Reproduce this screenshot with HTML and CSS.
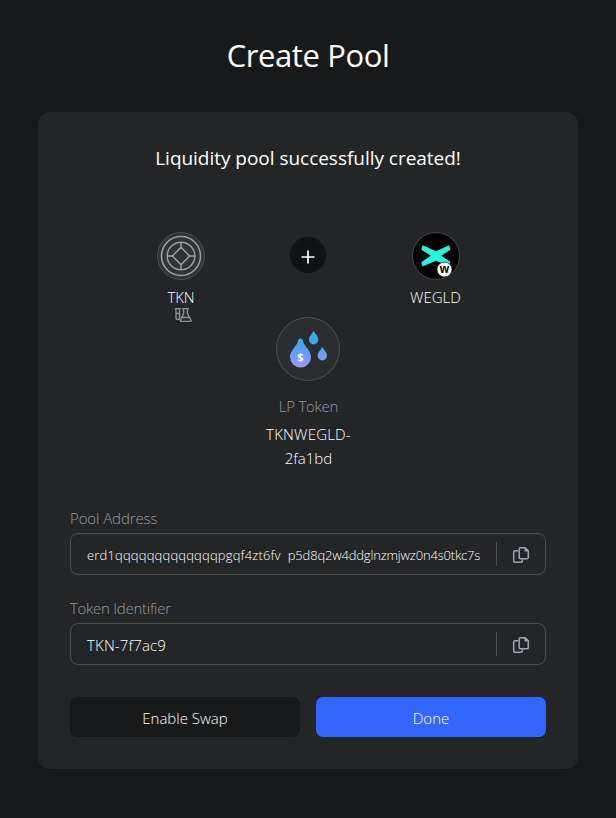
FILE: index.html
```html
<!DOCTYPE html>
<html lang="en">
<head>
<meta charset="utf-8">
<title>Create Pool</title>
<link rel="stylesheet" href="styles.css">
</head>
<body>
<svg width="0" height="0" class="defs">
  <symbol id="copy" viewBox="0 0 18 18">
    <path d="M6.200 4.700H2.900a1.200 1.200 0 0 0-1.200 1.200v9.200a1.200 1.200 0 0 0 1.200 1.200h6.200a1.200 1.200 0 0 0 1.200-1.200v-1.500" fill="none" stroke="currentColor" stroke-width="1.500"/>
    <path d="M8.400 1.700h4.700l3.200 3.200v6.600a1.200 1.200 0 0 1-1.200 1.200H8.400a1.200 1.200 0 0 1-1.200-1.200V2.900a1.200 1.200 0 0 1 1.200-1.200Z" fill="none" stroke="currentColor" stroke-width="1.500"/>
    <path d="M12.500 1.500v4h4Z" fill="currentColor"/>
  </symbol>
</svg>
<h1 class="title">Create Pool</h1>
<main class="card">
  <h2 class="subtitle">Liquidity pool successfully created!</h2>
  <div class="pair">
    <div class="token">
      <svg class="coin" viewBox="0 0 48 48" fill="none" stroke="#9a9fa3">
        <circle cx="24" cy="24" r="23.500" fill="#303335" stroke="#4c4f51"/>
        <circle cx="24" cy="24" r="19.500" stroke-width="1.600"/>
        <circle cx="24" cy="24" r="13.800" stroke-width="1.500"/>
        <path d="M24 15.300 32.700 24 24 32.700 15.300 24ZM24 10v5.300M24 32.700V38M10 24h5.300M32.700 24H38" stroke-width="1.500"/>
      </svg>
      <span class="name tkn">TKN</span>
      <svg class="lab" viewBox="0 0 18 16" fill="none" stroke="#8c939c" stroke-width="1.400">
        <path d="M.8 1.600h6M2 1.600v9.200a1.800 1.800 0 0 0 3.600 0V1.600M2 6.500h3.600M7.900 1.600h7M9.600 1.600v5L6.500 13.200q-.5 1.200.8 1.200h8.900q1.300 0 .8-1.200L13.400 6.600v-5M8 10.500h7.500"/>
      </svg>
    </div>
    <div class="plus">
      <svg width="14" height="14" viewBox="0 0 14 14"><path d="M7 .5v13M.5 7h13" stroke="#fff" stroke-width="1.700"/></svg>
    </div>
    <div class="token">
      <svg class="coin" viewBox="0 0 48 48">
        <circle cx="24" cy="24" r="23.500" fill="#000" stroke="#46484a"/>
        <path d="M10.600 13.300 24 19.200l13.200-5.900 1.200 4.500-9.200 6 9.200 6-1.200 4.500L24 28.700l-13.400 5.700-1.200-4.500 9.500-6.100-9.500-6Z" fill="#23f7dd"/>
        <circle cx="32.500" cy="37.500" r="7.500" fill="#fff" stroke="#111" stroke-width=".7"/>
        <text x="32.500" y="40.800" class="badge">w</text>
      </svg>
      <span class="name wegld">WEGLD</span>
    </div>
  </div>
  <div class="lp">
    <svg class="lp-icon" viewBox="0 0 64 64">
      <defs><linearGradient id="drop" gradientUnits="userSpaceOnUse" x1="0" y1="14" x2="0" y2="51"><stop offset="0" stop-color="#28afe8"/><stop offset=".45" stop-color="#4fa0ee"/><stop offset="1" stop-color="#a395ff"/></linearGradient></defs>
      <circle cx="32" cy="32" r="31.500" fill="#2b2d2f" stroke="#4e5052"/>
      <g fill="url(#drop)">
        <path d="M24.500 21.500c1.600 0 2.300 1.600 3 4 1.400 4 7.500 8.500 7.500 14.600a10.500 10.500 0 0 1-21 0c0-6.100 6.100-10.600 7.500-14.600.7-2.400 1.400-4 3-4Z"/>
        <path d="M37.700 13.500c1.300 3.600 4.700 5.600 4.700 9.200a4.700 4.700 0 0 1-9.400 0c0-3.600 3.400-5.600 4.700-9.200Z"/>
        <path d="M46.300 29.500c1.300 3.600 4.700 5.600 4.700 9.200a4.700 4.700 0 0 1-9.400 0c0-3.600 3.400-5.600 4.700-9.200Z"/>
      </g>
      <text x="24.500" y="43.500" class="dollar">$</text>
    </svg>
    <span class="label lp-label">LP Token</span>
    <div class="lp-name"><span class="lp-a">TKNWEGLD-</span><br><span class="lp-b">2fa1bd</span></div>
  </div>
  <section class="field">
    <div class="label"><span class="pool-label">Pool Address</span></div>
    <div class="box">
      <div class="address"><span class="head">erd1qqqqqqqqqqqqqpgqf4zt6fv</span><span class="tail">p5d8q2w4ddglnzmjwz0n4s0tkc7s</span></div>
      <button class="copy" aria-label="Copy"><svg width="18" height="18"><use href="#copy"/></svg></button>
    </div>
  </section>
  <section class="field">
    <div class="label"><span class="id-label">Token Identifier</span></div>
    <div class="box">
      <span class="identifier">TKN-7f7ac9</span>
      <button class="copy" aria-label="Copy"><svg width="18" height="18"><use href="#copy"/></svg></button>
    </div>
  </section>
  <div class="actions">
    <button class="btn"><span class="swap">Enable Swap</span></button>
    <button class="btn primary"><span class="done">Done</span></button>
  </div>
</main>
</body>
</html>
```
FILE: styles.css
```css
* { box-sizing: border-box; }
body {
  margin: 0;
  padding: 31px 38px 0;
  min-height: 818px;
  background: #18191b;
  color: #fff;
  font: 300 15px/24px "Open Sans", "Noto Sans", sans-serif;
}
.defs { display: block; }
.title { margin: 0; text-align: center; font-size: 31px; font-weight: 400; line-height: 48px; letter-spacing: -0.4px; }
.card { margin-top: 33px; height: 657px; padding: 32px; border-radius: 12px; background: #242527; }
.subtitle { margin: 0; text-align: center; font-size: 19px; font-weight: 400; line-height: 28px; letter-spacing: -0.03px; }
.pair { display: grid; grid-template-columns: repeat(3, 127.5px); justify-content: center; margin-top: 60px; height: 85px; }
.token { display: flex; flex-direction: column; align-items: center; }
.coin { width: 48px; height: 48px; }
.name { margin-top: 5px; line-height: 24px; }
.tkn { padding-left: 1px; letter-spacing: -0.2px; }
.lab { width: 18px; height: 16px; margin: -2px 0 0 4px; }
.plus { width: 36px; height: 36px; margin-top: 5px; padding-top: 3px; justify-self: center; border-radius: 50%; background: #111213; display: grid; place-items: center; }
.badge { font: 700 11.5px "Open Sans", sans-serif; text-anchor: middle; fill: #111; }
.dollar { font: 700 11px "Open Sans", sans-serif; text-anchor: middle; fill: #fff; }
.lp { display: flex; flex-direction: column; align-items: center; }
.lp-icon { width: 64px; height: 64px; }
.lp-label { margin-top: 13px; padding-left: 1px; letter-spacing: -0.25px; }
.lp-name { margin-top: 4px; padding-left: 1px; text-align: center; }
.lp-a { letter-spacing: 0.2px; }
.label { color: #959ba3; line-height: 24px; }
.pool-label { letter-spacing: -0.1px; }
.id-label { letter-spacing: -0.27px; }
.field { margin-top: 21px; }
.lp + .field { margin-top: 36px; }
.box { display: flex; align-items: center; justify-content: space-between; height: 42px; margin-top: 3px; padding-left: 16px; border: 1px solid #4a4c4e; border-radius: 8px; }
.address { display: flex; gap: 7px; padding-top: 1px; font-size: 13px; }
.head { letter-spacing: 0.17px; }
.tail { letter-spacing: -0.17px; }
.identifier { padding-top: 2px; letter-spacing: 0.15px; }
.copy { width: 49px; height: 24px; padding: 2px 0 0; border: 0; border-left: 1px solid #4a4c4e; background: none; color: #a0a3b4; display: grid; place-items: center; }
.actions { display: grid; grid-template-columns: 1fr 1fr; gap: 16px; margin-top: 32px; }
.btn { height: 40px; padding: 2px 0 0; border: 0; border-radius: 7px; background: #18191a; color: #fff; font: inherit; }
.btn.primary { background: #3366ff; }
```
